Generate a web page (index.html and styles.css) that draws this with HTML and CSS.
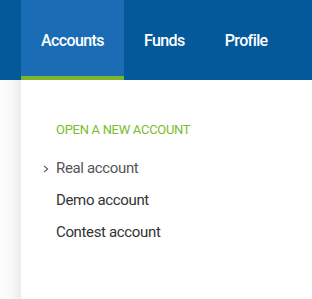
FILE: index.html
```html
<!DOCTYPE html>
<html>
<head>
<meta charset="utf-8">
<link rel="stylesheet" href="styles.css">
</head>
<body>
<nav class="bar">
  <a class="tab active">Accounts</a>
  <a class="tab">Funds</a>
  <a class="tab">Profile</a>
</nav>
<div class="main">
  <div class="gutter"></div>
  <div class="panel">
    <div class="heading">OPEN A NEW ACCOUNT</div>
    <ul class="list">
      <li class="item current"><svg class="chev" width="6" height="8" viewBox="0 0 6 8"><polyline points="1,0.8 4.6,4 1,7.2" fill="none" stroke="#555" stroke-width="1.1"/></svg>Real account</li>
      <li class="item">Demo account</li>
      <li class="item">Contest account</li>
    </ul>
  </div>
</div>
</body>
</html>
```
FILE: styles.css
```css
html, body {
  margin: 0;
  padding: 0;
  height: 100%;
  background: #fff;
}
body {
  font-family: Roboto, "Liberation Sans", sans-serif;
  display: flex;
  flex-direction: column;
}
.bar {
  height: 80px;
  background: #04599b;
  display: flex;
  padding-left: 21px;
  flex-shrink: 0;
}
.tab {
  color: #fff;
  font-size: 16px;
  font-weight: 500;
  letter-spacing: -0.6px;
  padding: 3px 20px 0;
  line-height: 76px;
  box-sizing: border-box;
  border-bottom: 4px solid transparent;
  height: 80px;
}
.tab.active {
  background: #1a6db5;
  border-bottom-color: #7ab52d;
}
.main {
  flex: 1;
  display: flex;
}
.gutter {
  width: 21px;
  background: linear-gradient(to right, #fdfdfd 0%, #f8f8f8 55%, #ebebeb 100%);
}
.panel {
  flex: 1;
  background: #fff;
  padding: 42px 0 0 35px;
}
.heading {
  color: #7cbb2c;
  font-size: 13px;
  line-height: 16px;
  letter-spacing: -0.3px;
}
.list {
  list-style: none;
  margin: 14px 0 0;
  padding: 0;
}
.item {
  position: relative;
  font-size: 15px;
  letter-spacing: -0.35px;
  line-height: 32px;
  color: #333;
}
.item.current {
  color: #555;
}
.chev {
  position: absolute;
  left: -13px;
  top: 13px;
}
```
